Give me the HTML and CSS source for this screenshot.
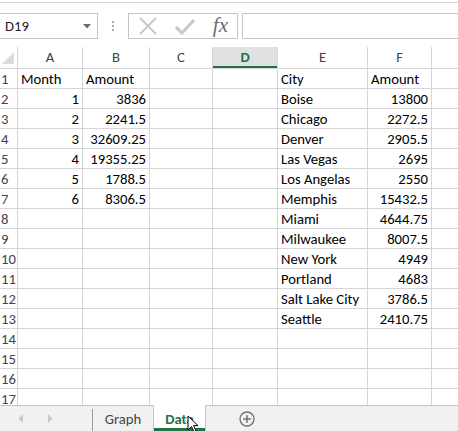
FILE: index.html
```html
<!DOCTYPE html>
<html>
<head>
<meta charset="utf-8">
<link rel="stylesheet" href="styles.css">
</head>
<body>
<div class="app">
  <div class="topline"></div>
  <div class="formula">
    <div class="namebox">
      <span class="nameval">D19</span>
      <svg class="dd" width="8" height="5" viewBox="0 0 8 5"><polygon points="0,0 8,0 4,4.5" fill="#6d6d6d"/></svg>
    </div>
    <div class="dots"><i></i><i></i><i></i></div>
    <div class="btns">
      <svg class="ico" width="20" height="20" viewBox="0 0 20 20"><path d="M2 2 L18 18 M18 2 L2 18" stroke="#c9c9c9" stroke-width="2" fill="none"/></svg>
      <svg class="ico" width="22" height="20" viewBox="0 0 22 20"><path d="M2 11 L8 17 L20 4" stroke="#c9c9c9" stroke-width="3.2" fill="none"/></svg>
      <span class="fx">fx</span>
    </div>
    <div class="input"></div>
  </div>
  <div class="sheet">
    <div class="grid">
      <div class="corner"><svg width="17" height="21" viewBox="0 0 17 21"><polygon points="14,5 14,17 2,17" fill="#dcdcdc"/></svg></div>
      <div class="ch">A</div><div class="ch">B</div><div class="ch">C</div><div class="ch sel">D</div><div class="ch">E</div><div class="ch">F</div><div class="ch"></div>

      <div class="rh">1</div><div class="c">Month</div><div class="c">Amount</div><div class="c"></div><div class="c"></div><div class="c">City</div><div class="c">Amount</div><div class="c"></div>
      <div class="rh">2</div><div class="c n">1</div><div class="c n">3836</div><div class="c"></div><div class="c"></div><div class="c">Boise</div><div class="c n">13800</div><div class="c"></div>
      <div class="rh">3</div><div class="c n">2</div><div class="c n">2241.5</div><div class="c"></div><div class="c"></div><div class="c">Chicago</div><div class="c n">2272.5</div><div class="c"></div>
      <div class="rh">4</div><div class="c n">3</div><div class="c n">32609.25</div><div class="c"></div><div class="c"></div><div class="c">Denver</div><div class="c n">2905.5</div><div class="c"></div>
      <div class="rh">5</div><div class="c n">4</div><div class="c n">19355.25</div><div class="c"></div><div class="c"></div><div class="c">Las Vegas</div><div class="c n">2695</div><div class="c"></div>
      <div class="rh">6</div><div class="c n">5</div><div class="c n">1788.5</div><div class="c"></div><div class="c"></div><div class="c">Los Angelas</div><div class="c n">2550</div><div class="c"></div>
      <div class="rh">7</div><div class="c n">6</div><div class="c n">8306.5</div><div class="c"></div><div class="c"></div><div class="c">Memphis</div><div class="c n">15432.5</div><div class="c"></div>
      <div class="rh">8</div><div class="c"></div><div class="c"></div><div class="c"></div><div class="c"></div><div class="c">Miami</div><div class="c n">4644.75</div><div class="c"></div>
      <div class="rh">9</div><div class="c"></div><div class="c"></div><div class="c"></div><div class="c"></div><div class="c">Milwaukee</div><div class="c n">8007.5</div><div class="c"></div>
      <div class="rh">10</div><div class="c"></div><div class="c"></div><div class="c"></div><div class="c"></div><div class="c">New York</div><div class="c n">4949</div><div class="c"></div>
      <div class="rh">11</div><div class="c"></div><div class="c"></div><div class="c"></div><div class="c"></div><div class="c">Portland</div><div class="c n">4683</div><div class="c"></div>
      <div class="rh">12</div><div class="c"></div><div class="c"></div><div class="c"></div><div class="c"></div><div class="c">Salt Lake City</div><div class="c n">3786.5</div><div class="c"></div>
      <div class="rh">13</div><div class="c"></div><div class="c"></div><div class="c"></div><div class="c"></div><div class="c">Seattle</div><div class="c n">2410.75</div><div class="c"></div>
      <div class="rh">14</div><div class="c"></div><div class="c"></div><div class="c"></div><div class="c"></div><div class="c"></div><div class="c"></div><div class="c"></div>
      <div class="rh">15</div><div class="c"></div><div class="c"></div><div class="c"></div><div class="c"></div><div class="c"></div><div class="c"></div><div class="c"></div>
      <div class="rh">16</div><div class="c"></div><div class="c"></div><div class="c"></div><div class="c"></div><div class="c"></div><div class="c"></div><div class="c"></div>
      <div class="rh">17</div><div class="c"></div><div class="c"></div><div class="c"></div><div class="c"></div><div class="c"></div><div class="c"></div><div class="c"></div>
    </div>
  </div>
  <div class="tabs">
    <div class="nav">
      <svg width="6" height="9" viewBox="0 0 6 9"><polygon points="5,0 5,9 0.5,4.5" fill="#c8c8c8"/></svg>
      <svg width="6" height="9" viewBox="0 0 6 9"><polygon points="1,0 1,9 5.5,4.5" fill="#c8c8c8"/></svg>
    </div>
    <div class="tab">Graph</div>
    <div class="tab active">Data</div>
    <div class="add">
      <svg width="16" height="16" viewBox="0 0 16 16"><circle cx="8" cy="8" r="7" fill="none" stroke="#6f6f6f" stroke-width="1.3"/><path d="M8 4.2 V11.8 M4.2 8 H11.8" stroke="#6f6f6f" stroke-width="1.5"/></svg>
    </div>
  </div>
  <svg class="cursor" width="12" height="18" viewBox="0 0 12 18"><path d="M1 1 L1 15 L4.5 11.5 L7 17 L9 16 L6.6 10.6 L11 10.6 Z" fill="#fff" stroke="#000" stroke-width="1"/></svg>
</div>
</body>
</html>
```

FILE: styles.css
```css
html, body {
  margin: 0;
  padding: 0;
  background: #fff;
}
body {
  font-family: Carlito, Calibri, "Liberation Sans", Arial, sans-serif;
  font-size: 14.67px;
  color: #000;
}
.app {
  position: relative;
  width: 458px;
  height: 431px;
  overflow: hidden;
  display: flex;
  flex-direction: column;
}
.topline {
  height: 2px;
  border-bottom: 1px solid #d5d5d5;
  flex: none;
}
.formula {
  flex: none;
  margin-top: 10px;
  height: 26px;
  display: flex;
  align-items: stretch;
}
.namebox {
  box-sizing: border-box;
  width: 99px;
  margin-left: -1px;
  border: 1px solid #c6c6c6;
  display: flex;
  align-items: center;
  justify-content: space-between;
  padding: 0 6px 0 5px;
  color: #222;
}
.nameval {
  font-size: 14.67px;
}
.dd {
  display: block;
}
.dots {
  width: 30px;
  display: flex;
  flex-direction: column;
  align-items: center;
  justify-content: center;
  gap: 2px;
}
.dots i {
  width: 2px;
  height: 2px;
  background: #a8a8a8;
  display: block;
}
.btns {
  box-sizing: border-box;
  width: 110px;
  border: 1px solid #c6c6c6;
  display: flex;
  align-items: center;
  padding: 0 9px 0 9px;
  justify-content: space-between;
}
.ico {
  display: block;
}
.fx {
  font-family: "Liberation Serif", "DejaVu Serif", serif;
  font-style: italic;
  font-size: 21px;
  color: #6d6d6d;
  line-height: 1;
  margin-top: -2px;
}
.input {
  flex: 1;
  margin-left: 4px;
  border: 1px solid #c6c6c6;
  border-right: none;
}
.sheet {
  flex: none;
  margin-top: 8px;
  height: 358px;
  overflow: hidden;
}
.grid {
  display: grid;
  grid-template-columns: 17px 64px 66px 62px 64px 89px 63px 26px;
  grid-template-rows: 21px;
  grid-auto-rows: 19px;
  gap: 1px;
  background: #d6d6d6;
}
.grid > div {
  background: #fff;
  white-space: nowrap;
  overflow: hidden;
}
.corner svg {
  display: block;
}
.ch {
  text-align: center;
  color: #444;
  font-size: 14.67px;
  line-height: 21px;
}
.ch.sel {
  background: #e1e1e1 !important;
  color: #217346;
  font-weight: bold;
  box-shadow: inset 0 -2px 0 #217346;
}
.rh {
  color: #444;
  line-height: 20px;
  padding-left: 1px;
  overflow: visible !important;
}
.c {
  line-height: 20px;
  padding: 0 3px 0 3px;
}
.c.n {
  text-align: right;
}
.tabs {
  flex: none;
  height: 25px;
  border-top: 1px solid #c6c6c6;
  background: #f1f1f1;
  display: flex;
  align-items: stretch;
}
.nav {
  width: 92px;
  display: flex;
  align-items: center;
  padding-left: 18px;
  gap: 23px;
  box-sizing: border-box;
}
.nav svg {
  display: block;
}
.tab {
  position: relative;
  box-sizing: border-box;
  width: 61px;
  border-left: 1px solid #9b9b9b;
  display: flex;
  align-items: center;
  justify-content: center;
  color: #444;
  font-size: 14.67px;
  margin-top: 3px;
  padding-bottom: 3px;
}
.tab.active {
  width: 53px;
  margin-top: -1px;
  padding-bottom: 0;
  padding-top: 1px;
  background: #fff;
  border-left: 1px solid #c6c6c6;
  border-right: 1px solid #c6c6c6;
  color: #217346;
  font-weight: bold;
  box-shadow: inset 0 -3px 0 #217346;
}
.add {
  width: 82px;
  display: flex;
  align-items: center;
  justify-content: center;
}
.add svg {
  display: block;
}
.cursor {
  position: absolute;
  left: 187px;
  top: 415px;
}
```
